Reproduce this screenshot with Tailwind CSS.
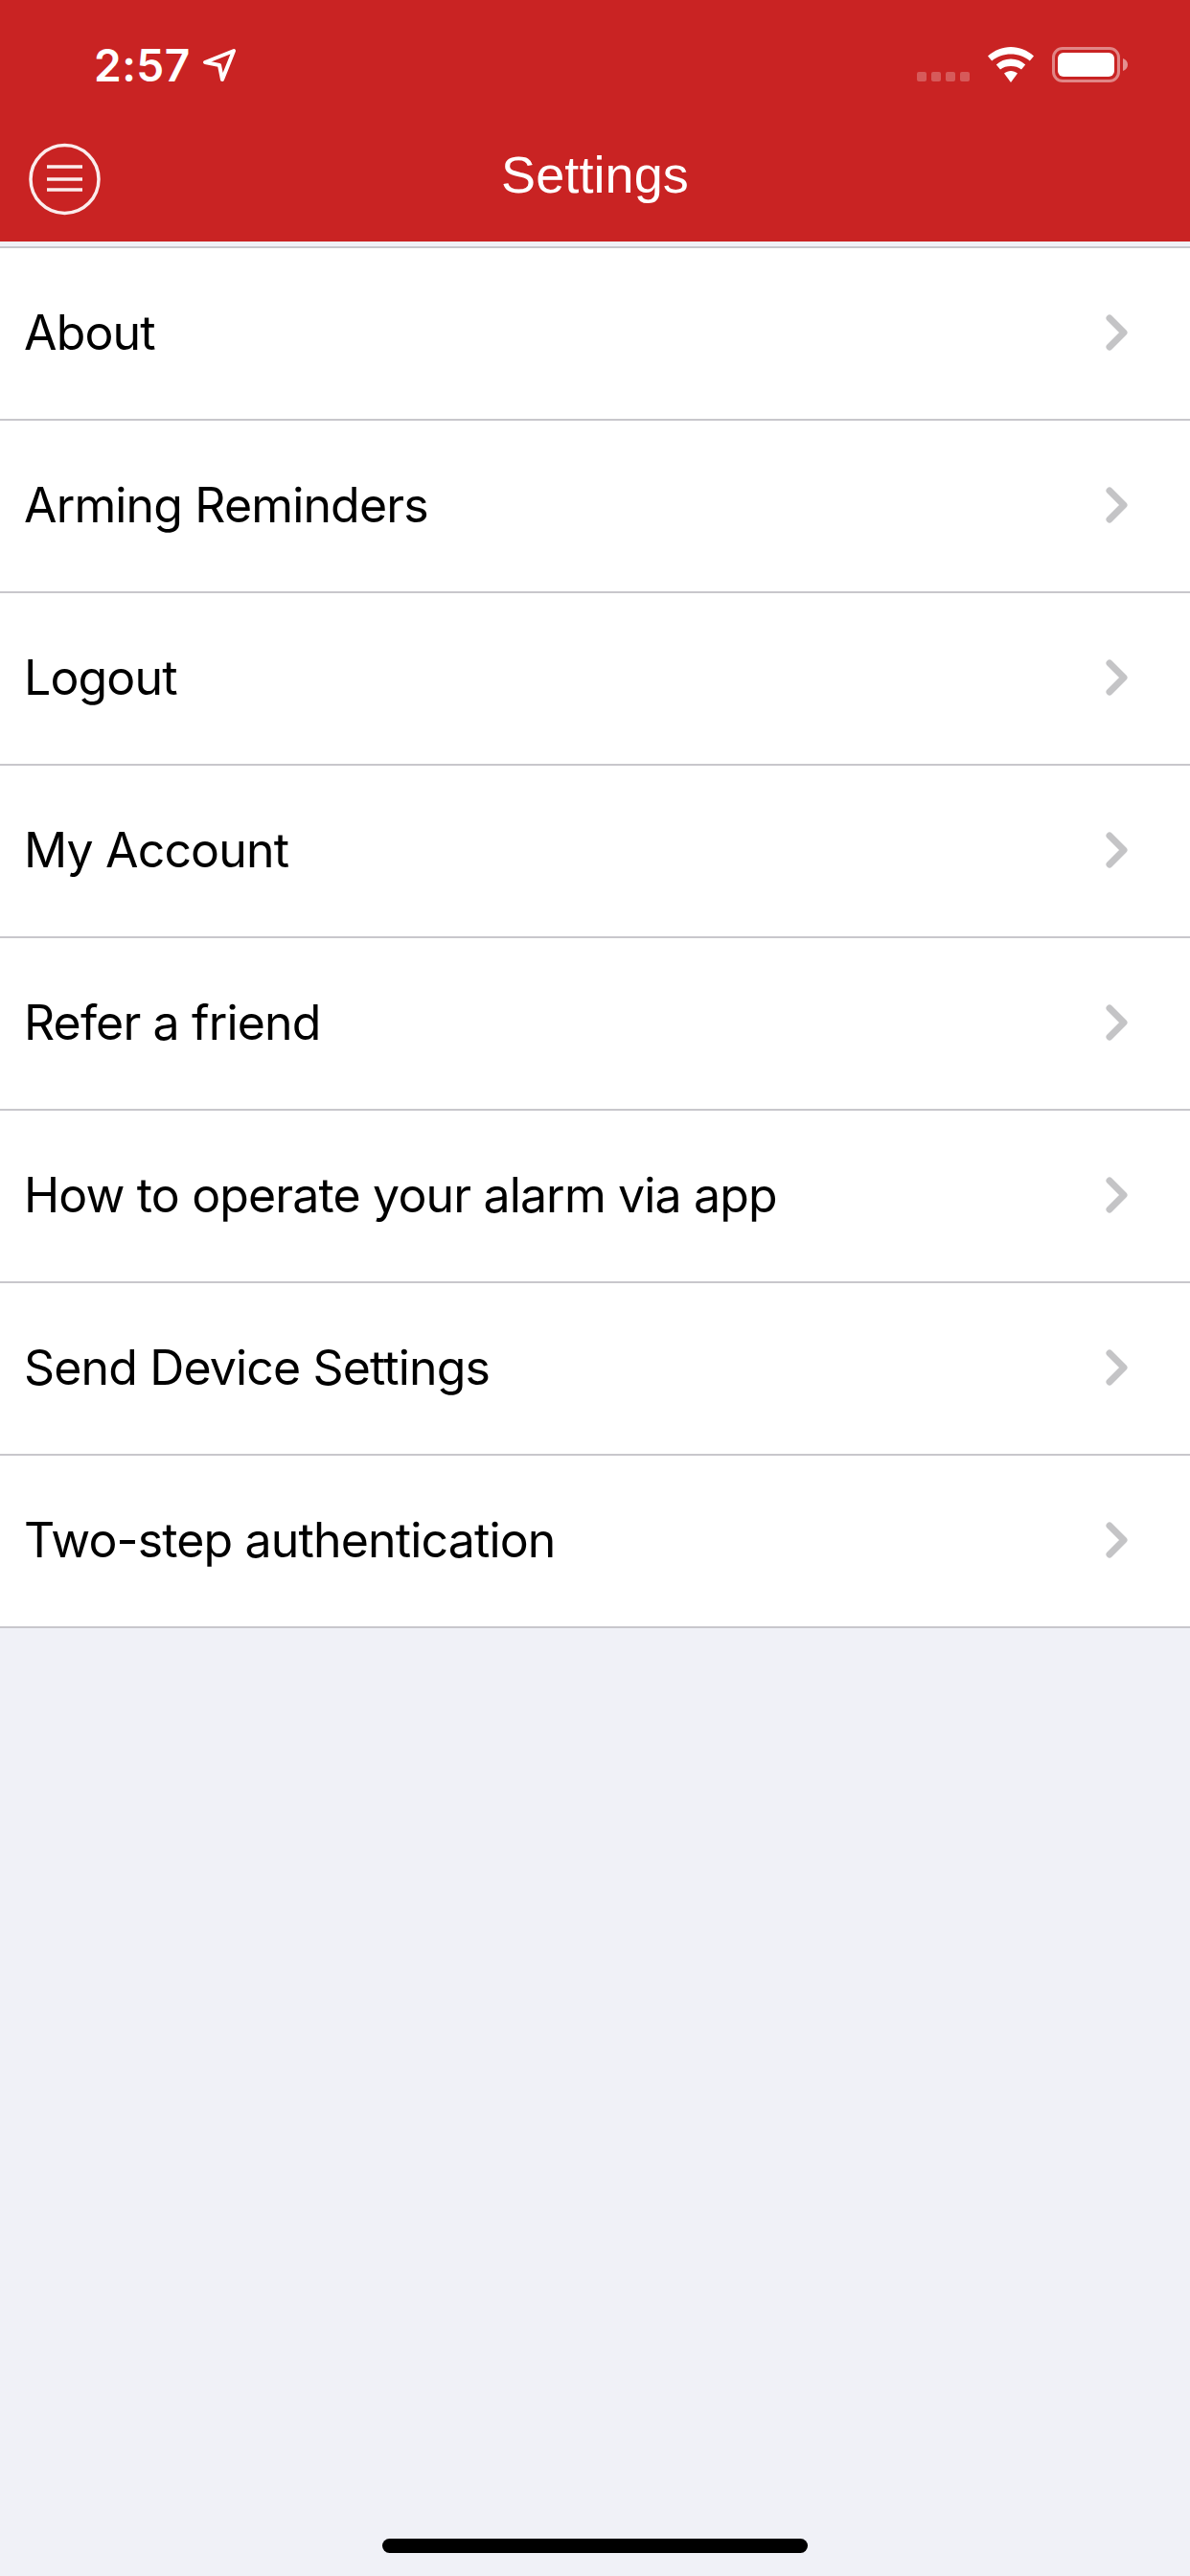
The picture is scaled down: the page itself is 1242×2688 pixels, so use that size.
<!DOCTYPE html>
<html><head><meta charset="utf-8">
<script src="https://cdn.jsdelivr.net/npm/@tailwindcss/browser@4"></script></head>
<body class="m-0">
<div class="w-[1242px] h-[2688px] bg-[#f0f1f7] flex flex-col font-['Inter','Liberation_Sans',sans-serif] overflow-hidden">
<header class="h-[252px] bg-[#c92323] text-white flex flex-col shrink-0">
  <div class="h-[140px] flex items-start pt-[49px] pl-[98px] pr-[65px]">
    <span class="text-[46px] leading-[38px] font-semibold tracking-[0.5px]">2:57</span>
    <svg class="ml-[12px] mt-[1px]" width="36" height="36" viewBox="0 0 36 36"><path d="M3 15 L33 3 L21 33 L18 18 Z" fill="none" stroke="#fff" stroke-width="4" stroke-linejoin="round"/></svg>
    <div class="ml-auto flex items-start">
      <div class="flex gap-[5px] mt-[26px]">
        <span class="w-[10px] h-[10px] rounded-[2px] bg-white/25"></span><span class="w-[10px] h-[10px] rounded-[2px] bg-white/25"></span><span class="w-[10px] h-[10px] rounded-[2px] bg-white/25"></span><span class="w-[10px] h-[10px] rounded-[2px] bg-white/25"></span>
      </div>
      <svg class="ml-[19px]" width="48" height="37" viewBox="0 0 48 37" fill="#fff"><path d="M24 0C15 0 7 3.500 0 9.500L4.200 14.500C10 9.800 16.500 7.500 24 7.500S38 9.800 43.800 14.500L48 9.500C41 3.500 33 0 24 0Z"/><path d="M24 12.500C18 12.500 13 14.700 8.800 18.500L13 23.500C16 21 19.800 20 24 20S32 21 35 23.500L39.200 18.500C35 14.700 30 12.500 24 12.500Z"/><path d="M24 25C21.500 25 19.300 25.900 17 27.500L24 37L31 27.500C28.700 25.900 26.500 25 24 25Z"/></svg>
      <div class="ml-[19px] flex items-center">
        <div class="w-[71px] h-[37px] rounded-[11px] border-[3px] border-white/45 p-[3px]"><div class="w-full h-full rounded-[6px] bg-white"></div></div>
        <svg class="ml-[3px]" width="5" height="13" viewBox="0 0 5 13"><path d="M0 0C3 1 5 3.500 5 6.500S3 12 0 13Z" fill="#fff" fill-opacity=".5"/></svg>
      </div>
    </div>
  </div>
  <div class="flex-1 grid grid-cols-[1fr_auto_1fr] items-start">
    <div class="pl-[30px] pt-[9px]">
      <svg class="block" width="76" height="76" viewBox="0 0 76 76" fill="none" stroke="#fff" stroke-opacity=".92"><circle cx="37.500" cy="38" r="35.500" stroke-width="3.500"/><path d="M19 25H56M19 38H56M19 49H56" stroke-width="3.500"/></svg>
    </div>
    <div class="font-['Liberation_Sans',sans-serif] text-[54px] leading-[60px] pt-[12px] tracking-[0.1px]">Settings</div>
    <div></div>
  </div>
</header>
<main class="mt-[5px] bg-white border-t-2 border-[#c8c7cc]">
  <a class="h-[180px] pb-[2px] flex items-center justify-between border-b-2 border-[#c8c7cc] pl-[25px] pr-[64px] text-[50px] tracking-[-0.85px] text-black">About<svg width="24" height="38" viewBox="0 0 24 38" fill="none" stroke="#c4c4c6" stroke-width="7" stroke-linecap="round" stroke-linejoin="round"><path d="M4 4L19 19L4 34"/></svg></a>
  <a class="h-[180px] pb-[2px] flex items-center justify-between border-b-2 border-[#c8c7cc] pl-[25px] pr-[64px] text-[50px] tracking-[-0.85px] text-black">Arming Reminders<svg width="24" height="38" viewBox="0 0 24 38" fill="none" stroke="#c4c4c6" stroke-width="7" stroke-linecap="round" stroke-linejoin="round"><path d="M4 4L19 19L4 34"/></svg></a>
  <a class="h-[180px] pb-[2px] flex items-center justify-between border-b-2 border-[#c8c7cc] pl-[25px] pr-[64px] text-[50px] tracking-[-0.85px] text-black">Logout<svg width="24" height="38" viewBox="0 0 24 38" fill="none" stroke="#c4c4c6" stroke-width="7" stroke-linecap="round" stroke-linejoin="round"><path d="M4 4L19 19L4 34"/></svg></a>
  <a class="h-[180px] pb-[2px] flex items-center justify-between border-b-2 border-[#c8c7cc] pl-[25px] pr-[64px] text-[50px] tracking-[-0.85px] text-black">My Account<svg width="24" height="38" viewBox="0 0 24 38" fill="none" stroke="#c4c4c6" stroke-width="7" stroke-linecap="round" stroke-linejoin="round"><path d="M4 4L19 19L4 34"/></svg></a>
  <a class="h-[180px] pb-[2px] flex items-center justify-between border-b-2 border-[#c8c7cc] pl-[25px] pr-[64px] text-[50px] tracking-[-0.85px] text-black">Refer a friend<svg width="24" height="38" viewBox="0 0 24 38" fill="none" stroke="#c4c4c6" stroke-width="7" stroke-linecap="round" stroke-linejoin="round"><path d="M4 4L19 19L4 34"/></svg></a>
  <a class="h-[180px] pb-[2px] flex items-center justify-between border-b-2 border-[#c8c7cc] pl-[25px] pr-[64px] text-[50px] tracking-[-0.85px] text-black">How to operate your alarm via app<svg width="24" height="38" viewBox="0 0 24 38" fill="none" stroke="#c4c4c6" stroke-width="7" stroke-linecap="round" stroke-linejoin="round"><path d="M4 4L19 19L4 34"/></svg></a>
  <a class="h-[180px] pb-[2px] flex items-center justify-between border-b-2 border-[#c8c7cc] pl-[25px] pr-[64px] text-[50px] tracking-[-0.85px] text-black">Send Device Settings<svg width="24" height="38" viewBox="0 0 24 38" fill="none" stroke="#c4c4c6" stroke-width="7" stroke-linecap="round" stroke-linejoin="round"><path d="M4 4L19 19L4 34"/></svg></a>
  <a class="h-[180px] pb-[2px] flex items-center justify-between border-b-2 border-[#c8c7cc] pl-[25px] pr-[64px] text-[50px] tracking-[-0.85px] text-black">Two-step authentication<svg width="24" height="38" viewBox="0 0 24 38" fill="none" stroke="#c4c4c6" stroke-width="7" stroke-linecap="round" stroke-linejoin="round"><path d="M4 4L19 19L4 34"/></svg></a>
</main>
<div class="flex-1 flex items-end justify-center pb-[24px]"><div class="w-[444px] h-[15px] rounded-full bg-black"></div></div>
</div>
</body></html>
